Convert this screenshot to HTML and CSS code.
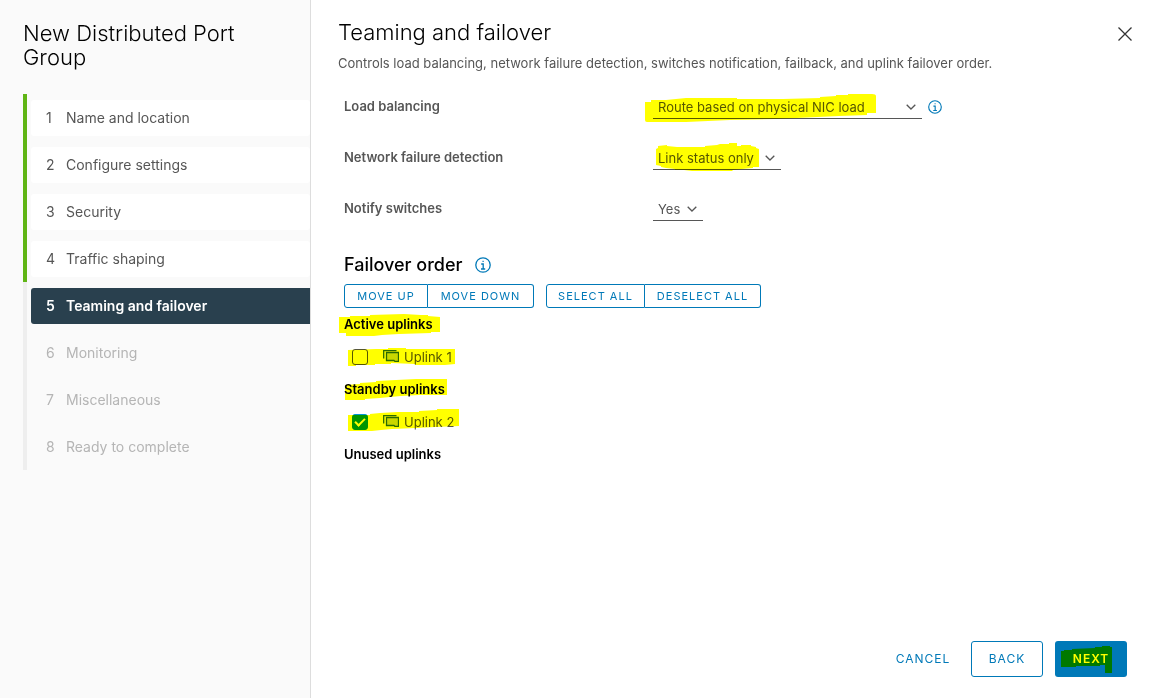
FILE: index.html
```html
<!DOCTYPE html>
<html lang="en">
<head>
<meta charset="utf-8">
<title>New Distributed Port Group</title>
<link rel="stylesheet" href="styles.css">
</head>
<body>
<div class="wizard">
  <aside class="sidebar">
    <h1 class="wizard-title">New Distributed Port Group</h1>
    <ol class="steps">
      <li class="step done"><button type="button"><span class="num">1</span>Name and location</button></li>
      <li class="step done"><button type="button"><span class="num">2</span>Configure settings</button></li>
      <li class="step done"><button type="button"><span class="num">3</span>Security</button></li>
      <li class="step done"><button type="button"><span class="num">4</span>Traffic shaping</button></li>
      <li class="step current"><button type="button" aria-current="step"><span class="num">5</span>Teaming and failover</button></li>
      <li class="step"><button type="button" disabled><span class="num">6</span>Monitoring</button></li>
      <li class="step"><button type="button" disabled><span class="num">7</span>Miscellaneous</button></li>
      <li class="step"><button type="button" disabled><span class="num">8</span>Ready to complete</button></li>
    </ol>
  </aside>

  <main class="page">
    <header class="page-head">
      <h2 class="page-title">Teaming and failover</h2>
      <button type="button" class="close" aria-label="Close">
        <svg width="16" height="16" viewBox="0 0 16 16"><path d="M1.500 1.500l13 13M14.500 1.500l-13 13" fill="none" stroke="#333" stroke-width="1.300"/></svg>
      </button>
    </header>
    <p class="description">Controls load balancing, network failure detection, switches notification, failback, and uplink failover order.</p>

    <form class="content">
      <div class="field">
        <label for="balancing">Load balancing</label>
        <div class="control">
          <div class="select wide">
            <select id="balancing"><option>Route based on physical NIC load</option></select>
            <svg class="chevron" width="10" height="6" viewBox="0 0 10 6"><path d="M.7.7L5 5 9.300.7"/></svg>
            <svg class="mark mark-balancing" width="240" height="34" viewBox="0 0 240 34"><path d="M5 12h6v-2h15l20-2h51v1h46l37-1V7l16-1V5h12V4h24q4 0 4 2v17h-9v2l-28 1-64 3-45 1-44 2H7q-2 0-2-2z"/></svg>
          </div>
          <button type="button" class="info" aria-label="Load balancing help">
            <svg width="14" height="14" viewBox="0 0 16 16"><circle cx="8" cy="8" r="7.200"/><path d="M6.200 7h2v5M6 12h4.200M7.500 4.300h1.200"/></svg>
          </button>
        </div>
      </div>
      <div class="field">
        <label for="detection">Network failure detection</label>
        <div class="control">
          <div class="select medium">
            <select id="detection"><option>Link status only</option></select>
            <svg class="chevron" width="10" height="6" viewBox="0 0 10 6"><path d="M.7.7L5 5 9.300.7"/></svg>
            <svg class="mark mark-detection" width="110" height="34" viewBox="0 0 110 34"><path d="M3 8l2-1V5l9-1v1l10 1h28V5l12-1 3-1h9V2h8v3h4V4h10v1l5 1v1l3 1v18h-6v1l-11 1-9 1-1 1H39l-8-1h-9v-1l-9-1-5-1V25l-5-1z"/></svg>
          </div>
        </div>
      </div>
      <div class="field">
        <label for="notify">Notify switches</label>
        <div class="control">
          <div class="select narrow">
            <select id="notify"><option>Yes</option></select>
            <svg class="chevron" width="10" height="6" viewBox="0 0 10 6"><path d="M.7.7L5 5 9.300.7"/></svg>
          </div>
        </div>
      </div>

      <h3 class="order-title">Failover order
        <button type="button" class="info" aria-label="Failover order help">
          <svg width="16" height="16" viewBox="0 0 16 16"><circle cx="8" cy="8" r="7.200"/><path d="M6.200 7h2v5M6 12h4.200M7.500 4.300h1.200"/></svg>
        </button>
      </h3>
      <div class="toolbar">
        <div class="group"><button type="button" class="move-up">Move up</button><button type="button" class="move-down">Move down</button></div>
        <div class="group"><button type="button" class="select-all">Select all</button><button type="button" class="deselect-all">Deselect all</button></div>
      </div>

      <h4 class="uplink-title">Active uplinks
        <svg class="mark mark-title" width="106" height="24" viewBox="0 0 106 24"><path d="M0 3h11V2h20V1l34-1 17 1h7v1l12 1v15h-9v1l-32 1-17 1-8 1H7v-3H0z"/></svg>
      </h4>
      <div class="uplink">
        <input type="checkbox" id="uplink1">
        <label for="uplink1"><svg class="nic" width="16" height="12" viewBox="0 0 16 12"><path d="M.7 8.500V.7h12.800"/><path class="card" d="M3.500 2.500h12v9h-3.500l-1-1H3.500z"/></svg>Uplink 1</label>
        <svg class="mark mark-uplink" width="112" height="24" viewBox="0 0 112 24"><path d="M0 4l28-1h12V2h18v1h49v15l-10 1H67v-1l-24-1v1H27v1H8v1H0z"/></svg>
      </div>
      <h4 class="uplink-title">Standby uplinks
        <svg class="mark mark-title" width="110" height="24" viewBox="0 0 110 24"><path d="M6 6l15-1V4l16-1V2l20-1 20-1h31v16H80l-18 1-11 1-10 1-15 1v1H6z"/></svg>
      </h4>
      <div class="uplink">
        <input type="checkbox" id="uplink2" checked>
        <label for="uplink2"><svg class="nic" width="16" height="12" viewBox="0 0 16 12"><path d="M.7 8.500V.7h12.800"/><path class="card" d="M3.500 2.500h12v9h-3.500l-1-1H3.500z"/></svg>Uplink 2</label>
        <svg class="mark mark-uplink" width="112" height="24" viewBox="0 0 112 24"><path d="M0 4h22V3l10-1 18-1h21V0l18-1V-2h22v17l-24 1-19 1-24 1-11 1-9 1H0z"/></svg>
      </div>
      <h4 class="uplink-title">Unused uplinks</h4>
    </form>

    <footer class="actions">
      <button type="button" class="btn link">Cancel</button>
      <button type="button" class="btn outline">Back</button>
      <button type="button" class="btn primary">Next
        <svg class="mark mark-next" width="54" height="28" viewBox="0 0 54 28"><path d="M1 5h3V4h8V3l23-1V1h7V0h8v1h2v26h-7v-8h-5v1H16v1H1z"/></svg>
      </button>
    </footer>
  </main>
</div>
</body>
</html>
```
FILE: styles.css
```css
* {
  box-sizing: border-box;
}

body {
  margin: 0;
  font-family: Inter, "Open Sans", sans-serif;
  font-size: 13px;
  line-height: 24px;
  color: #565656;
  background: #fff;
}

button,
select {
  margin: 0;
  padding: 0;
  border: 0;
  background: none;
  font: inherit;
  color: inherit;
}

h1, h2, h3, h4, p, ol {
  margin: 0;
  padding: 0;
  font-weight: 400;
}

.wizard {
  display: flex;
  min-height: 100vh;
}

/* Sidebar */
.sidebar {
  flex: 0 0 311px;
  padding: 21px 0 0 23px;
  background: #fafafa;
  border-right: 1px solid #ddd;
}

.wizard-title,
.page-title {
  font-size: 22px;
  font-weight: 300;
  color: #000;
}

.wizard-title {
  padding-right: 60px;
}

.steps {
  margin-top: 25px;
  list-style: none;
}

.step {
  padding: 6px 0 5px 4px;
  border-left: 4px solid #eee;
}

.step.done {
  border-color: #60b515;
}

.step button {
  display: flex;
  align-items: center;
  width: 100%;
  height: 36px;
  padding-left: 15px;
  border-radius: 3px;
  font-size: 14px;
  text-align: left;
  color: #b5b5b5;
}

.step.done button {
  background: #fff;
  color: #565656;
}

.step.current button {
  border-radius: 3px 0 0 3px;
  background: #29404e;
  color: #fff;
  font-weight: 600;
}

.num {
  flex: 0 0 20px;
}

/* Page */
.page {
  flex: 1;
  display: flex;
  flex-direction: column;
  padding: 20px 22px 21px 27px;
}

.page-head {
  display: flex;
  align-items: flex-start;
  justify-content: space-between;
}

.close {
  display: flex;
  margin-right: -12px;
  padding: 6px;
}

.description {
  margin-top: 3px;
  line-height: 24px;
}

.content {
  flex: 1;
  padding: 20px 0 0 6px;
}

.field {
  display: grid;
  grid-template-columns: 309px 1fr;
  margin-bottom: 27px;
}

.field label {
  line-height: 22px;
  font-weight: 600;
}

.control {
  display: flex;
  align-items: center;
  gap: 6px;
}

.select {
  position: relative;
}

.select select {
  appearance: none;
  display: block;
  width: 100%;
  height: 24px;
  padding: 0 20px 0 5px;
  border-bottom: 1px solid #565656;
  border-radius: 0;
}

.wide { width: 269px; }
.medium { width: 128px; }
.narrow { width: 50px; }

.chevron {
  position: absolute;
  right: 6px;
  top: 9px;
  fill: none;
  stroke: #565656;
  stroke-width: 1.3;
  pointer-events: none;
}

.info {
  display: flex;
}

.info svg {
  fill: none;
  stroke: #0079b8;
  stroke-width: 1.3;
}

/* Highlighter strokes */
.mark {
  position: absolute;
  overflow: visible;
  fill: #ff0;
  mix-blend-mode: multiply;
  pointer-events: none;
}

.mark-balancing { left: -13px; top: -5px; }
.mark-detection { left: 0; top: -5px; }
.mark-title { left: -5px; top: 6px; }
.mark-uplink { left: -4px; top: 6px; }
.mark-next { left: 5px; top: 5px; }

/* Failover order */
.order-title {
  display: flex;
  align-items: center;
  gap: 12px;
  margin-top: 32px;
  font-size: 18px;
  font-weight: 500;
  color: #000;
}

.toolbar {
  display: flex;
  gap: 12px;
  margin-top: 7px;
}

.group {
  display: flex;
}

.group button {
  height: 24px;
  border: 1px solid #0079b8;
  font-size: 11px;
  line-height: 22px;
  letter-spacing: 1px;
  text-transform: uppercase;
  color: #0079b8;
}

.group button:first-child {
  border-radius: 3px 0 0 3px;
}

.group button:last-child {
  border-left: 0;
  border-radius: 0 3px 3px 0;
}

.move-up { width: 84px; }
.move-down { width: 106px; }
.select-all { width: 99px; }
.deselect-all { width: 116px; }

.uplink-title {
  position: relative;
  height: 32px;
  line-height: 32px;
  font-weight: 600;
  color: #000;
}

.uplink {
  position: relative;
  display: flex;
  align-items: center;
  gap: 15px;
  height: 33px;
  margin-left: 8px;
}

.uplink input {
  appearance: none;
  display: grid;
  place-items: center;
  width: 16px;
  height: 16px;
  margin: 1px 0 0;
  border: 1px solid #565656;
  border-radius: 3px;
  background: #fff;
}

.uplink input:checked {
  border-color: #0095d3;
  background: #0095d3;
}

.uplink input:checked::after {
  content: "";
  width: 8px;
  height: 4px;
  margin-bottom: 2px;
  border: solid #fff;
  border-width: 0 0 2px 2px;
  transform: rotate(-45deg);
}

.uplink label {
  display: flex;
  align-items: center;
  gap: 5px;
}

.nic {
  margin-bottom: 2px;
  fill: none;
  stroke: #2a6a78;
  stroke-width: 1.3;
}

.nic .card {
  fill: #c9d7dc;
}

/* Footer */
.actions {
  display: flex;
  justify-content: flex-end;
  gap: 12px;
}

.btn {
  position: relative;
  width: 72px;
  height: 36px;
  border-radius: 3px;
  font-size: 12px;
  letter-spacing: 1px;
  text-transform: uppercase;
  color: #0079b8;
}

.outline {
  border: 1px solid #0079b8;
}

.primary {
  background: #0079b8;
  color: #fff;
  font-weight: 600;
}
```
